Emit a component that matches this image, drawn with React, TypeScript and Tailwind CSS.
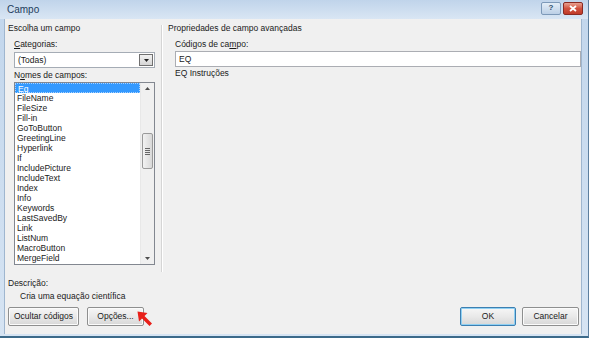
import React from 'react';

const FIELDS = [
  'Eq',
  'FileName',
  'FileSize',
  'Fill-in',
  'GoToButton',
  'GreetingLine',
  'Hyperlink',
  'If',
  'IncludePicture',
  'IncludeText',
  'Index',
  'Info',
  'Keywords',
  'LastSavedBy',
  'Link',
  'ListNum',
  'MacroButton',
  'MergeField',
];

const font = { fontFamily: '"Liberation Sans", Arial, sans-serif' };

function Btn({ children, focused, className }: { children: React.ReactNode; focused?: boolean; className?: string }) {
  return (
    <div
      className={
        'h-[19px] flex items-center justify-center rounded-[2px] border text-[8.5px] text-[#1a1a1a] bg-gradient-to-b from-[#f6f6f6] via-[#e9e9e9] to-[#d7d7d7] ' +
        (focused ? 'border-[#3c7fb1] shadow-[inset_0_0_0_1px_#8fd0f3]' : 'border-[#8e8f8f] shadow-[inset_0_0_0_1px_#fbfbfb]') +
        ' ' +
        (className ?? '')
      }
    >
      {children}
    </div>
  );
}

function ScrollArrow({ up }: { up?: boolean }) {
  return (
    <div className="h-[11px] flex items-center justify-center">
      <svg width="5" height="3" viewBox="0 0 5 3">
        {up ? <polygon points="2.5,0 5,3 0,3" fill="#4d4d4d" /> : <polygon points="0,0 5,0 2.5,3" fill="#4d4d4d" />}
      </svg>
    </div>
  );
}

export default function App() {
  return (
    <div
      className="w-[589px] h-[338px] flex flex-col bg-gradient-to-b from-[#c2d6ec] to-[#d6e4f3] border-b-[2px] border-b-[#3c6a8a] border-r border-r-[#5d7f9f] overflow-hidden"
      style={font}
    >
      {/* title bar */}
      <div className="h-[19px] flex items-center pl-[7px] pr-[5px] bg-gradient-to-b from-[#c0d4ea] to-[#d9e6f4]">
        <span className="text-[10px] text-[#1e3d5c]">Campo</span>
        <div className="ml-auto flex items-center gap-[2px] -mt-[3px]">
          <div className="w-[20px] h-[13px] rounded-[2px] border border-[#7d99b8] bg-gradient-to-b from-[#e3edf7] to-[#bcd0e6] flex items-center justify-center text-[8px] font-bold text-[#2c4a6b]">
            ?
          </div>
          <div className="w-[20px] h-[13px] rounded-[2px] border border-[#8a2a22] bg-gradient-to-b from-[#e8a090] via-[#d0513e] to-[#c03a28] flex items-center justify-center">
            <svg width="8" height="7" viewBox="0 0 8 7">
              <path d="M1 1 L7 6 M7 1 L1 6" stroke="#ffffff" strokeWidth="1.8" />
            </svg>
          </div>
        </div>
      </div>

      {/* body */}
      <div className="flex-1 ml-[4px] mr-[6px] mb-[2px] bg-[#f0f0f0] border-l border-r border-[#9fb6cf] flex flex-col text-[8.5px] text-[#1a1a1a]">
        <div className="flex h-[253px]">
          {/* left column */}
          <div className="w-[156px] pl-[3px] pt-[4px] flex flex-col">
            <div className="h-[11px] leading-[11px]">Escolha um campo</div>
            <div className="pl-[6px] flex flex-col">
              <div className="h-[11px] leading-[11px] mt-[5px]">
                <span className="underline">C</span>ategorias:
              </div>
              <div className="mt-[2px] w-[141px] h-[16px] bg-white border border-[#a5acb5] flex items-center">
                <span className="pl-[3px]">(Todas)</span>
                <div className="ml-auto mr-[1px] w-[14px] h-[12px] border border-[#707070] bg-gradient-to-b from-[#f2f2f2] to-[#d5d5d5] flex items-center justify-center">
                  <svg width="5" height="3" viewBox="0 0 5 3">
                    <polygon points="0,0 5,0 2.5,3" fill="#222" />
                  </svg>
                </div>
              </div>
              <div className="h-[11px] leading-[11px] mt-[2px]">
                N<span className="underline">o</span>mes de campos:
              </div>
              <div className="mt-[1px] w-[141px] h-[183px] bg-white border border-[#828790] flex">
                <div className="flex-1 flex flex-col">
                  {FIELDS.map((f, i) => (
                    <div
                      key={f}
                      className={
                        'h-[10px] leading-[10px] pl-[2px] ' +
                        (i === 0 ? 'bg-[#3399ff] text-white border border-dotted border-[#a8d2ff] pl-[1px] leading-[8px]' : '')
                      }
                    >
                      {f}
                    </div>
                  ))}
                </div>
                <div className="w-[14px] bg-[#f0f0f0] border-l border-[#e8e8e8] flex flex-col">
                  <ScrollArrow up />
                  <div className="h-[39px]" />
                  <div className="mx-[1px] h-[36px] rounded-[2px] border border-[#9a9a9a] bg-gradient-to-r from-[#f2f2f2] to-[#d8d8d8] flex flex-col items-center justify-center gap-[1px]">
                    <div className="w-[5px] h-px bg-[#666]" />
                    <div className="w-[5px] h-px bg-[#666]" />
                    <div className="w-[5px] h-px bg-[#666]" />
                    <div className="w-[5px] h-px bg-[#666]" />
                  </div>
                  <div className="flex-1" />
                  <ScrollArrow />
                </div>
              </div>
            </div>
          </div>

          {/* separator */}
          <div className="w-[2px] mt-[6px] border-l border-[#d5d5d5] border-r border-r-white h-[247px]" />

          {/* right column */}
          <div className="flex-1 pl-[5px] pt-[4px] flex flex-col">
            <div className="h-[11px] leading-[11px]">Propriedades de campo avançadas</div>
            <div className="pl-[7px] flex flex-col">
              <div className="h-[11px] leading-[11px] mt-[5px]">
                Códigos de ca<span className="underline">m</span>po:
              </div>
              <div className="mt-[1px] h-[16px] bg-white border border-[#abadb3] flex items-center pl-[3px]">EQ</div>
              <div className="h-[11px] leading-[11px] mt-[1px]">EQ Instruções</div>
            </div>
          </div>
        </div>

        {/* description */}
        <div className="pl-[3px] mt-[6px] h-[11px] leading-[11px]">Descrição:</div>
        <div className="pl-[15px] mt-[2px] h-[11px] leading-[11px]">Cria uma equação científica</div>

        {/* buttons */}
        <div className="flex items-center mt-[5px] pl-[3px] pr-[2px]">
          <Btn className="w-[71px]">Ocultar códigos</Btn>
          <div className="relative ml-[8px]">
            <Btn className="w-[57px]">Opções...</Btn>
            <svg className="absolute left-[50px] top-[4px]" width="16" height="16" viewBox="0 0 16 16">
              <polygon points="0.5,0.5 10.5,2 7.5,5 15,12.5 12.5,15 5,7.5 2,10.5" fill="#e8201a" />
            </svg>
          </div>
          <Btn focused className="w-[56px] ml-auto">OK</Btn>
          <Btn className="w-[57px] ml-[6px]">Cancelar</Btn>
        </div>
      </div>
    </div>
  );
}
